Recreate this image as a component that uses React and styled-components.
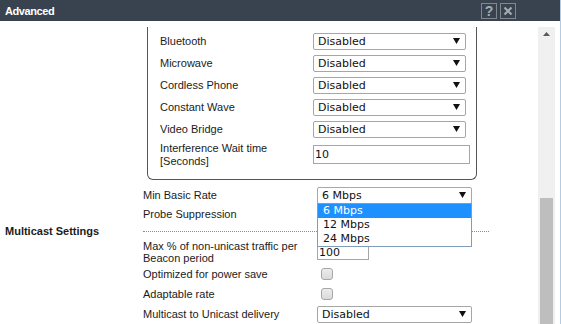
import React from "react";
import styled, { createGlobalStyle } from "styled-components";

const GlobalStyle = createGlobalStyle`
  html, body {
    margin: 0;
    padding: 0;
    background: #fff;
  }
  body {
    font-family: "Liberation Sans", Arial, sans-serif;
    font-size: 11px;
    color: #1b1b1b;
  }
`;

const Window = styled.div`
  width: 561px;
  height: 324px;
  box-sizing: border-box;
  border-right: 1px solid #b3cbe3;
  display: flex;
  flex-direction: column;
  overflow: hidden;
`;

const TitleBar = styled.div`
  height: 21px;
  flex: none;
  background: #38434f;
  display: flex;
  align-items: center;
  padding: 0 44px 0 5px;
`;

const Title = styled.div`
  color: #fff;
  font-weight: bold;
  font-size: 11px;
  letter-spacing: -0.4px;
`;

const TitleButtons = styled.div`
  margin-left: auto;
  display: flex;
  gap: 3px;
`;

const TitleButton = styled.div`
  width: 14px;
  height: 14px;
  border: 1px solid #7f8890;
  color: #a4abb2;
  font: bold 14px "Liberation Sans", Arial, sans-serif;
  display: flex;
  align-items: center;
  justify-content: center;
`;

const Body = styled.div`
  flex: 1;
  display: flex;
  padding-top: 6px;
  overflow: hidden;
`;

const Content = styled.div`
  flex: 1;
  overflow: hidden;
`;

const ScrollTrack = styled.div`
  width: 17px;
  margin-right: 5px;
  background: #f0f0f0;
  display: flex;
  flex-direction: column;
  align-items: center;
`;

const Thumb = styled.div`
  width: 13px;
  flex: 1;
  margin-top: 162px;
  background: #bebebe;
`;

const Fieldset = styled.div`
  margin-left: 147px;
  width: 330px;
  box-sizing: border-box;
  border: 1px solid #555;
  border-top: none;
  border-radius: 0 0 6px 6px;
  padding: 3px 0 10px 12px;
`;

const FieldRow = styled.div`
  display: grid;
  grid-template-columns: 153px auto;
  align-items: center;
  height: ${(p) => p.$h || 22}px;
  line-height: 13px;
`;

const Main = styled.div`
  padding-left: 143px;
`;

const Row = styled.div`
  display: grid;
  grid-template-columns: 174px auto;
  align-items: center;
  height: ${(p) => p.$h || 20}px;
  margin-top: ${(p) => p.$mt || 0}px;
  line-height: 12px;
  position: relative;
`;

const SectionHead = styled.div`
  display: grid;
  grid-template-columns: 138px 346px;
  align-items: center;
  height: 18px;
  padding-left: 5px;
`;

const SectionTitle = styled.div`
  font-weight: bold;
  color: #1b1b1b;
`;

const Rule = styled.div`
  border-top: 1px dotted #8c8c8c;
`;

const SelectBox = styled.div`
  position: relative;
  width: ${(p) => p.$w || 155}px;
  height: 17px;
  box-sizing: border-box;
  border: 1px solid ${(p) => (p.$focus ? "#7db2e8" : "#a6a6a6")};
  border-radius: 2px;
  padding: 0 5px 0 4px;
  display: flex;
  align-items: center;
  justify-content: space-between;
  font: 11px "DejaVu Sans", Verdana, sans-serif;
  color: #111;
`;

const DropList = styled.div`
  position: absolute;
  top: 100%;
  left: -1px;
  width: 155px;
  box-sizing: border-box;
  border: 1px solid #7f9db9;
  background: #fff;
  z-index: 2;
`;

const Option = styled.div`
  height: 14px;
  line-height: 14px;
  padding-left: 5px;
  background: ${(p) => (p.$active ? "#1e90ff" : "#fff")};
  color: ${(p) => (p.$active ? "#fff" : "#111")};
`;

const TextInput = styled.div`
  width: ${(p) => p.$w}px;
  height: ${(p) => p.$h}px;
  box-sizing: border-box;
  border: 1px solid #a6a6a6;
  padding-left: 1px;
  display: flex;
  align-items: center;
  font: 11px "DejaVu Sans", Verdana, sans-serif;
  color: #111;
`;

const Check = styled.div`
  width: 12px;
  height: 12px;
  margin-left: 4px;
  box-sizing: border-box;
  border: 1px solid #a7a7a7;
  border-radius: 3px;
  background: linear-gradient(#ececec, #dadada);
`;

const Arrow = () => (
  <svg width="7" height="6" viewBox="0 0 7 6">
    <path d="M0 0H7L3.5 6Z" fill="#111" />
  </svg>
);

const Select = ({ value, w, focus, children }) => (
  <SelectBox $w={w} $focus={focus}>
    <span>{value}</span>
    <Arrow />
    {children}
  </SelectBox>
);

const interference = ["Bluetooth", "Microwave", "Cordless Phone", "Constant Wave", "Video Bridge"];

export default function App() {
  return (
    <Window>
      <GlobalStyle />
      <TitleBar>
        <Title>Advanced</Title>
        <TitleButtons>
          <TitleButton>?</TitleButton>
          <TitleButton>
            <svg width="10" height="10" viewBox="0 0 10 10">
              <path d="M1.5 1.5L8.5 8.5M8.5 1.5L1.5 8.5" stroke="#a4abb2" strokeWidth="2.2" />
            </svg>
          </TitleButton>
        </TitleButtons>
      </TitleBar>
      <Body>
        <Content>
          <Fieldset>
            {interference.map((name) => (
              <FieldRow key={name}>
                <span>{name}</span>
                <Select value="Disabled" w={153} />
              </FieldRow>
            ))}
            <FieldRow $h={29}>
              <span>
                Interference Wait time
                <br />
                [Seconds]
              </span>
              <TextInput $w={157} $h={19}>10</TextInput>
            </FieldRow>
          </Fieldset>
          <Main>
            <Row $mt={5}>
              <span>Min Basic Rate</span>
              <Select value="6 Mbps" focus>
                <DropList>
                  <Option $active>6 Mbps</Option>
                  <Option>12 Mbps</Option>
                  <Option>24 Mbps</Option>
                </DropList>
              </Select>
            </Row>
            <Row $h={17}>
              <span>Probe Suppression</span>
              <Check />
            </Row>
          </Main>
          <SectionHead>
            <SectionTitle>Multicast Settings</SectionTitle>
            <Rule />
          </SectionHead>
          <Main>
            <Row $h={24}>
              <span>
                Max % of non-unicast traffic per
                <br />
                Beacon period
              </span>
              <TextInput $w={52} $h={16}>100</TextInput>
            </Row>
            <Row>
              <span>Optimized for power save</span>
              <Check />
            </Row>
            <Row>
              <span>Adaptable rate</span>
              <Check />
            </Row>
            <Row>
              <span>Multicast to Unicast delivery</span>
              <Select value="Disabled" />
            </Row>
          </Main>
        </Content>
        <ScrollTrack>
          <svg width="7" height="4" viewBox="0 0 7 4" style={{ marginTop: 5 }}>
            <path d="M0 4L3.5 0L7 4Z" fill="#5a5a5a" />
          </svg>
          <Thumb />
        </ScrollTrack>
      </Body>
    </Window>
  );
}
